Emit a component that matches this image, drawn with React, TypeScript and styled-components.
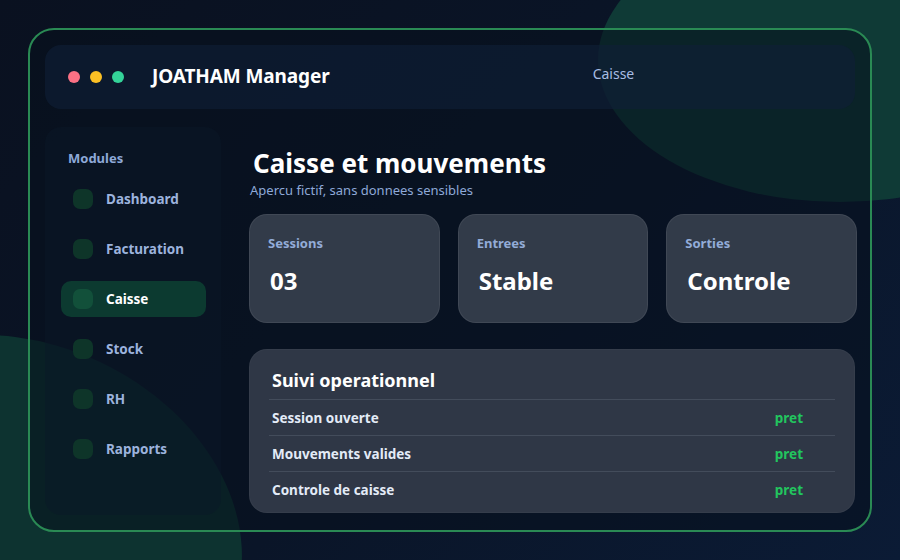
import React from 'react'
import styled, { createGlobalStyle } from 'styled-components'

const GlobalStyle = createGlobalStyle`
  html, body {
    margin: 0;
    padding: 0;
  }
  body {
    font-family: "Noto Sans", "Open Sans", "DejaVu Sans", sans-serif;
    background: #0a1222;
  }
`

const Page = styled.div`
  position: relative;
  width: 900px;
  height: 560px;
  overflow: hidden;
  box-sizing: border-box;
  padding: 28px 28px;
  background: linear-gradient(135deg, #0a1120 0%, #0a1528 55%, #0b1b35 100%);
`

const Blob = styled.div<{ $x: number; $y: number; $rx: number; $ry: number; $rot?: number; $color: string }>`
  position: absolute;
  left: ${(p) => p.$x - p.$rx}px;
  top: ${(p) => p.$y - p.$ry}px;
  width: ${(p) => p.$rx * 2}px;
  height: ${(p) => p.$ry * 2}px;
  border-radius: 50%;
  transform: rotate(${(p) => p.$rot ?? 0}deg);
  background: ${(p) => p.$color};
`

const Frame = styled.div`
  position: relative;
  height: 100%;
  box-sizing: border-box;
  border: 2px solid #2a8a54;
  border-radius: 26px;
  background: rgba(8, 16, 30, 0.55);
  padding: 15px;
  display: flex;
  flex-direction: column;
  gap: 18px;
`

const Header = styled.header`
  height: 64px;
  flex: none;
  box-sizing: border-box;
  border-radius: 16px;
  background: rgba(16, 31, 54, 0.65);
  display: flex;
  align-items: center;
  padding: 0 23px;
`

const Dots = styled.div`
  display: flex;
  gap: 10px;
  margin-right: 28px;
`

const Dot = styled.span<{ $color: string }>`
  width: 12px;
  height: 12px;
  border-radius: 50%;
  background: ${(p) => p.$color};
`

const Brand = styled.div`
  font-size: 19px;
  font-weight: 700;
  color: #ffffff;
  letter-spacing: -0.1px;
  margin-top: -2px;
`

const Crumb = styled.div`
  margin-left: 263px;
  font-size: 14px;
  color: #a7bde3;
  margin-top: -8px;
`

const Body = styled.div`
  flex: 1;
  display: flex;
  gap: 28px;
  min-height: 0;
`

const Sidebar = styled.aside`
  width: 176px;
  flex: none;
  box-sizing: border-box;
  border-radius: 16px;
  background: rgba(12, 24, 40, 0.45);
  padding: 22px 15px 16px 16px;
  display: flex;
  flex-direction: column;
  gap: 14px;
`

const SideTitle = styled.div`
  font-size: 13px;
  font-weight: 700;
  color: #8ea9d8;
  padding-left: 7px;
  line-height: 18px;
`

const NavList = styled.nav`
  display: flex;
  flex-direction: column;
  gap: 14px;
`

const NavItem = styled.div<{ $active?: boolean }>`
  height: 36px;
  border-radius: 10px;
  display: flex;
  align-items: center;
  gap: 13px;
  padding: 0 12px;
  background: ${(p) => (p.$active ? '#0c3a30' : 'transparent')};
  color: ${(p) => (p.$active ? '#ffffff' : '#9cb3dd')};
  font-size: 13.5px;
  font-weight: 700;
`

const NavIcon = styled.span<{ $active?: boolean }>`
  width: 20px;
  height: 20px;
  border-radius: 7px;
  background: ${(p) => (p.$active ? '#12503a' : '#0e3529')};
`

const Main = styled.main`
  flex: 1;
  display: flex;
  flex-direction: column;
  padding-top: 19px;
`

const Title = styled.h1`
  margin: 0 0 0 4px;
  font-size: 26px;
  line-height: 34px;
  font-weight: 700;
  color: #ffffff;
`

const Subtitle = styled.p`
  margin: 1px 0 0 1px;
  font-size: 13px;
  line-height: 18px;
  color: #8ea9d8;
`

const Cards = styled.div`
  margin-top: 15px;
  display: grid;
  grid-template-columns: repeat(3, 1fr);
  gap: 18px;
  margin-right: -2px;
`

const Card = styled.div`
  height: 109px;
  box-sizing: border-box;
  border-radius: 18px;
  background: #323b49;
  border: 1px solid rgba(255, 255, 255, 0.07);
  padding: 19px 18px;
`

const CardLabel = styled.div`
  font-size: 13px;
  font-weight: 700;
  color: #93acd8;
  line-height: 18px;
`

const CardValue = styled.div`
  margin-top: 13px;
  margin-left: 2px;
  font-size: 24px;
  font-weight: 700;
  color: #ffffff;
  line-height: 32px;
`

const Panel = styled.section`
  margin-top: 26px;
  border-radius: 18px;
  background: #2f3746;
  border: 1px solid rgba(255, 255, 255, 0.03);
  padding: 18px 19px 5px 19px;
`

const PanelTitle = styled.h2`
  margin: 0 0 0 3px;
  font-size: 18px;
  line-height: 24px;
  font-weight: 700;
  color: #ffffff;
  padding-bottom: 7px;
`

const Row = styled.div`
  height: 36px;
  box-sizing: border-box;
  border-top: 1px solid #434c5b;
  display: flex;
  align-items: center;
  justify-content: space-between;
  padding: 0 32px 0 3px;
  font-size: 13.5px;
  font-weight: 700;
`

const RowLabel = styled.span`
  color: #e3ebf7;
`

const Status = styled.span`
  color: #22c55e;
`

const modules = ['Dashboard', 'Facturation', 'Caisse', 'Stock', 'RH', 'Rapports']

const stats = [
  { label: 'Sessions', value: '03' },
  { label: 'Entrees', value: 'Stable' },
  { label: 'Sorties', value: 'Controle' },
]

const checks = ['Session ouverte', 'Mouvements valides', 'Controle de caisse']

export default function App() {
  return (
    <>
      <GlobalStyle />
      <Page>
        <Blob $x={840} $y={60} $rx={242} $ry={142} $color="#0f3a36" />
        <Blob $x={25} $y={520} $rx={225} $ry={175} $rot={25} $color="#0d3330" />
        <Frame>
          <Header>
            <Dots>
              <Dot $color="#fb7185" />
              <Dot $color="#fbbf24" />
              <Dot $color="#34d399" />
            </Dots>
            <Brand>JOATHAM Manager</Brand>
            <Crumb>Caisse</Crumb>
          </Header>
          <Body>
            <Sidebar>
              <SideTitle>Modules</SideTitle>
              <NavList>
                {modules.map((m) => (
                  <NavItem key={m} $active={m === 'Caisse'}>
                    <NavIcon $active={m === 'Caisse'} />
                    {m}
                  </NavItem>
                ))}
              </NavList>
            </Sidebar>
            <Main>
              <Title>Caisse et mouvements</Title>
              <Subtitle>Apercu fictif, sans donnees sensibles</Subtitle>
              <Cards>
                {stats.map((s) => (
                  <Card key={s.label}>
                    <CardLabel>{s.label}</CardLabel>
                    <CardValue>{s.value}</CardValue>
                  </Card>
                ))}
              </Cards>
              <Panel>
                <PanelTitle>Suivi operationnel</PanelTitle>
                {checks.map((c) => (
                  <Row key={c}>
                    <RowLabel>{c}</RowLabel>
                    <Status>pret</Status>
                  </Row>
                ))}
              </Panel>
            </Main>
          </Body>
        </Frame>
      </Page>
    </>
  )
}
